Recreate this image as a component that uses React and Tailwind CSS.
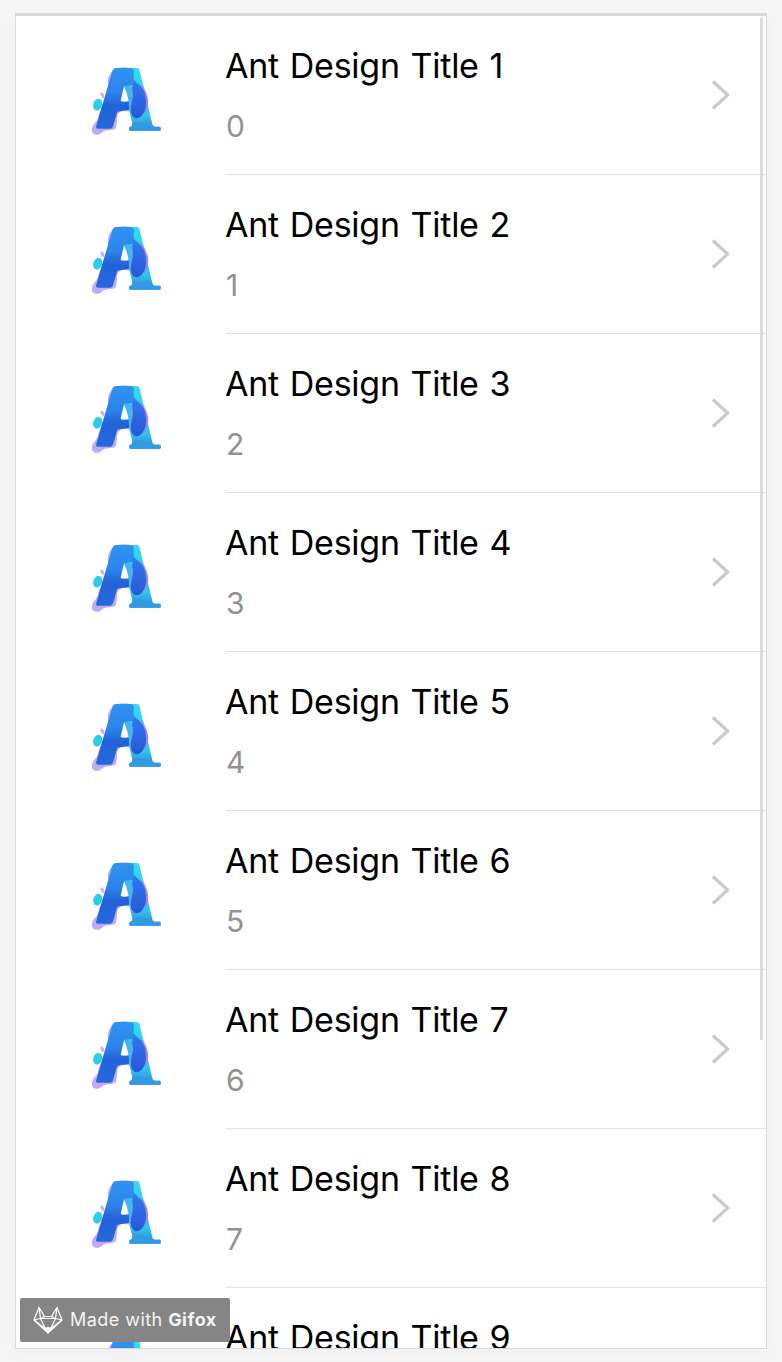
import React from "react";

function Logo() {
  return (
    <svg viewBox="0 0 285 285" className="h-[95px] w-[95px] shrink-0" aria-hidden="true">
      <defs>
        <linearGradient id="leg" x1="0" y1="0" x2="0" y2="1">
          <stop offset="0" stopColor="#2f94f0" />
          <stop offset="0.4" stopColor="#2c84ea" />
          <stop offset="0.62" stopColor="#2262d8" />
          <stop offset="1" stopColor="#2568dc" />
        </linearGradient>
        <linearGradient id="right" x1="0" y1="0" x2="0" y2="1">
          <stop offset="0" stopColor="#2fdcf2" />
          <stop offset="0.75" stopColor="#35c3ef" />
          <stop offset="0.92" stopColor="#3299d8" />
          <stop offset="1" stopColor="#309cf0" />
        </linearGradient>
        <linearGradient id="drop" x1="0" y1="0" x2="0" y2="1">
          <stop offset="0" stopColor="#2c80ea" />
          <stop offset="0.4" stopColor="#2f6ae6" />
          <stop offset="1" stopColor="#2758d4" />
        </linearGradient>
      </defs>
      <path d="M104 42C120 35 154 33 166 50C180 76 207 112 204 147C201 176 177 185 159 170L126 167C112 175 110 182 111 196L108 219C94 231 78 220 65 234C51 245 33 239 36 221C39 203 54 201 55 182L86 98C80 77 85 55 104 42Z" fill="#c2a8f5" />
      <path d="M62 113C69 111 74 119 73 129C65 130 60 120 62 113Z" fill="#c9b0f6" />
      <ellipse cx="53" cy="149" rx="13" ry="18" transform="rotate(18 53 149)" fill="#2bcdec" />
      <path d="M145 39H170Q178 39 179 48L217 207Q218 215 225 215H239Q242 215 242 219V225Q242 227 239 227H151Q148 227 148 224V218Q148 215 151 215H154Q158 212 157 205L147 165L132 94Z" fill="url(#right)" />
      <path d="M158 203C175 199 194 203 208 209Q218 215 225 215H239Q242 215 242 219V225Q242 227 239 227H151Q148 227 148 224V218Q148 215 151 215Q157 214 158 203Z" fill="#3299e4" />
      <path d="M179 84C193 104 207 125 204 150C203 161 198 169 192 174Z" fill="#9a82ea" />
      <path d="M132 92L119 140H149L146 110Z" fill="white" />
      <path d="M111 39H151Q161 39 162 50C159 60 163 76 161 90L132 93L122 137C130 143 141 140 149 137V164L112 170L99 214Q97 222 89 221H53Q46 220 49 212L97 48Q100 39 108 39Z" fill="url(#leg)" />
      <path d="M131 94C141 89 154 94 160 103C164 121 153 137 154 166L147 164C148 139 141 111 131 94Z" fill="#45b4ee" />
      <path d="M161 73C168 84 183 90 192 109C196 121 198 134 198 147C197 172 183 191 168 190C152 186 150 165 154 148C158 130 161 120 157 104C155 92 163 84 161 73Z" fill="url(#drop)" />
    </svg>
  );
}

function Arrow() {
  return (
    <svg viewBox="0 0 20 32" className="mr-9 h-8 w-5 shrink-0" fill="none" stroke="#cacaca" strokeWidth="3.2" aria-hidden="true">
      <path d="M2.9 2.5L17.7 16L2.9 29.5" />
    </svg>
  );
}

function Row({ index }) {
  return (
    <div className="flex h-[159px] shrink-0">
      <div className="w-[210px] shrink-0 pt-[39px] pl-16">
        <Logo />
      </div>
      <div className="flex flex-1 items-center justify-between border-b border-[#dfdfdf]">
        <div className="self-start pt-[26px]">
          <div className="-ml-px h-12 text-[34px] leading-[48px] tracking-[-0.26px] whitespace-nowrap text-black [word-spacing:1.6px]">
            Ant Design Title {index + 1}
          </div>
          <div className="mt-3 h-12 text-[30px] leading-[48px] text-[#929292]">{index}</div>
        </div>
        <Arrow />
      </div>
    </div>
  );
}

function Badge() {
  return (
    <div className="absolute top-[1298px] left-5 flex h-11 w-[210px] items-center rounded-[2px] bg-[#858585] pl-[13px] text-white">
      <svg viewBox="0 0 30 28" className="h-7 w-[30px] shrink-0" fill="none" stroke="white" strokeWidth="1.2" strokeLinejoin="round" aria-hidden="true">
        <path d="M6 1.5L1 14L15 27L29 14L24 1.5L18.5 10.5H11.5Z" />
        <path d="M6 1.5L7.5 12.5L11.5 10.5M24 1.5L22.5 12.5L18.5 10.5M1 14L7.5 12.5L12.5 23M29 14L22.5 12.5L17.5 23M7.5 12.5H22.5M1 14L12.5 23M29 14L17.5 23" />
        <path d="M11.5 22.5L15 21.5L18.5 22.5L15 27Z" fill="white" />
      </svg>
      <span className="ml-[7px] text-[18px] leading-6 tracking-[0.45px] whitespace-nowrap text-[#f4f4f4]">
        Made with <b className="font-bold">Gifox</b>
      </span>
    </div>
  );
}

export default function App() {
  return (
    <div className="relative h-[1362px] w-[782px] overflow-hidden bg-[#f6f6f6] pt-[13px] pl-[15px] font-['Inter',sans-serif]">
      <div className="relative flex h-[1336px] w-[752px] flex-col overflow-hidden border border-t-[3px] border-[#dadada] bg-[#fefefe] shadow-[0_4px_16px_rgba(0,0,0,0.03)]">
        {Array.from({ length: 9 }, (_, index) => (
          <Row key={index} index={index} />
        ))}
        <div className="absolute top-0.5 right-[3px] h-[1022px] w-[3px] bg-[#dddddd]" />
      </div>
      <Badge />
    </div>
  );
}
